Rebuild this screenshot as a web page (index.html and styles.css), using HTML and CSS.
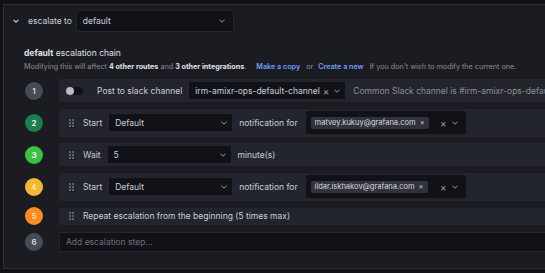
FILE: index.html
```html
<!DOCTYPE html>
<html lang="en">
<head>
    <meta charset="UTF-8">
    <meta name="viewport" content="width=device-width, initial-scale=1.0">
    <title>Escalation chain</title>
    <link rel="stylesheet" href="styles.css">
</head>
<body>

    <div class="panel">
        <!-- Маршрут -->
        <div class="route-row">
            <svg class="caret" width="6" height="4" viewBox="0 0 6 4"><polyline points="0.5,0.8 3,3.2 5.5,0.8" fill="none" stroke="#ccccdc" stroke-width="1.1"/></svg>
            <span>escalate to</span>
            <div class="select select-route">
                <span>default</span>
                <svg class="chev" width="6" height="4" viewBox="0 0 6 4"><polyline points="0.5,0.8 3,3.2 5.5,0.8" fill="none" stroke="#9fa0a8" stroke-width="1"/></svg>
            </div>
        </div>

        <div class="chain">
            <div class="chain-title"><b>default</b> escalation chain</div>
            <div class="chain-note">
                Modifying this will affect <b>4 other routes</b> and <b>3 other integrations</b>.<a href="#" class="link link-copy">Make a copy</a><span class="or">or</span><a href="#" class="link">Create a new</a><span class="tail">If you don't wish to modify the current one.</span>
            </div>

            <ol class="steps">
                <li class="step">
                    <span class="num num-grey">1</span>
                    <div class="step-body">
                        <span class="toggle"><span class="knob"></span></span>
                        <span class="label">Post to slack channel</span>
                        <div class="select select-slack">
                            <span>irm-amixr-ops-default-channel</span>
                            <span class="clear">×</span>
                            <svg class="chev" width="6" height="4" viewBox="0 0 6 4"><polyline points="0.5,0.8 3,3.2 5.5,0.8" fill="none" stroke="#9fa0a8" stroke-width="1"/></svg>
                        </div>
                        <span class="hint">Common Slack channel is #irm-amixr-ops-default-channel</span>
                    </div>
                </li>
                <li class="step">
                    <span class="num num-green">2</span>
                    <div class="step-body tall">
                        <svg class="handle" width="5" height="8" viewBox="0 0 5 8"><circle cx="1" cy="1" r="0.8"/><circle cx="4" cy="1" r="0.8"/><circle cx="1" cy="4" r="0.8"/><circle cx="4" cy="4" r="0.8"/><circle cx="1" cy="7" r="0.8"/><circle cx="4" cy="7" r="0.8"/></svg>
                        <span class="label">Start</span>
                        <div class="select select-step">
                            <span>Default</span>
                            <svg class="chev" width="6" height="4" viewBox="0 0 6 4"><polyline points="0.5,0.8 3,3.2 5.5,0.8" fill="none" stroke="#9fa0a8" stroke-width="1"/></svg>
                        </div>
                        <span class="label">notification for</span>
                        <div class="multi">
                            <span class="chip">matvey.kukuy@grafana.com <span class="chip-x">×</span></span>
                            <span class="clear">×</span>
                            <svg class="chev" width="6" height="4" viewBox="0 0 6 4"><polyline points="0.5,0.8 3,3.2 5.5,0.8" fill="none" stroke="#9fa0a8" stroke-width="1"/></svg>
                        </div>
                    </div>
                </li>
                <li class="step">
                    <span class="num num-lime">3</span>
                    <div class="step-body">
                        <svg class="handle" width="5" height="8" viewBox="0 0 5 8"><circle cx="1" cy="1" r="0.8"/><circle cx="4" cy="1" r="0.8"/><circle cx="1" cy="4" r="0.8"/><circle cx="4" cy="4" r="0.8"/><circle cx="1" cy="7" r="0.8"/><circle cx="4" cy="7" r="0.8"/></svg>
                        <span class="label">Wait</span>
                        <div class="select select-step">
                            <span>5</span>
                            <svg class="chev" width="6" height="4" viewBox="0 0 6 4"><polyline points="0.5,0.8 3,3.2 5.5,0.8" fill="none" stroke="#9fa0a8" stroke-width="1"/></svg>
                        </div>
                        <span class="label">minute(s)</span>
                    </div>
                </li>
                <li class="step">
                    <span class="num num-yellow">4</span>
                    <div class="step-body tall">
                        <svg class="handle" width="5" height="8" viewBox="0 0 5 8"><circle cx="1" cy="1" r="0.8"/><circle cx="4" cy="1" r="0.8"/><circle cx="1" cy="4" r="0.8"/><circle cx="4" cy="4" r="0.8"/><circle cx="1" cy="7" r="0.8"/><circle cx="4" cy="7" r="0.8"/></svg>
                        <span class="label">Start</span>
                        <div class="select select-step">
                            <span>Default</span>
                            <svg class="chev" width="6" height="4" viewBox="0 0 6 4"><polyline points="0.5,0.8 3,3.2 5.5,0.8" fill="none" stroke="#9fa0a8" stroke-width="1"/></svg>
                        </div>
                        <span class="label">notification for</span>
                        <div class="multi">
                            <span class="chip">ildar.iskhakov@grafana.com <span class="chip-x">×</span></span>
                            <span class="clear">×</span>
                            <svg class="chev" width="6" height="4" viewBox="0 0 6 4"><polyline points="0.5,0.8 3,3.2 5.5,0.8" fill="none" stroke="#9fa0a8" stroke-width="1"/></svg>
                        </div>
                    </div>
                </li>
                <li class="step">
                    <span class="num num-orange">5</span>
                    <div class="step-body short">
                        <svg class="handle" width="5" height="8" viewBox="0 0 5 8"><circle cx="1" cy="1" r="0.8"/><circle cx="4" cy="1" r="0.8"/><circle cx="1" cy="4" r="0.8"/><circle cx="4" cy="4" r="0.8"/><circle cx="1" cy="7" r="0.8"/><circle cx="4" cy="7" r="0.8"/></svg>
                        <span class="label">Repeat escalation from the beginning (5 times max)</span>
                    </div>
                </li>
                <li class="step">
                    <span class="num num-grey">6</span>
                    <input class="add-step" type="text" placeholder="Add escalation step...">
                </li>
            </ol>
        </div>
    </div>

</body>
</html>
```

FILE: styles.css
```css
/* Основные стили */
:root {
    --page-bg: #111217;
    --panel-bg: #1a1c21;
    --row-bg: #22252b;
    --input-bg: #111217;
    --border-color: #2c3036;
    --text-color: #ccccdc;
    --text-muted: #8e8e97;
    --link-color: #6e9fff;
}

body {
    margin: 0;
    padding: 4px 0 4px 3px;
    background-color: var(--page-bg);
    color: var(--text-color);
    font-family: Inter, "Open Sans", sans-serif;
    font-size: 8.5px;
    overflow: hidden;
}

.panel {
    width: 542px;
    height: 265px;
    box-sizing: border-box;
    background-color: var(--panel-bg);
    border: 1px solid var(--border-color);
    border-right: none;
    overflow: hidden;
}

/* Строка маршрута */
.route-row {
    display: flex;
    align-items: center;
    height: 22px;
    margin-top: 5px;
    padding-left: 9px;
}

.caret {
    margin-right: 9px;
}

.select {
    display: flex;
    align-items: center;
    box-sizing: border-box;
    height: 19px;
    padding: 0 5px 0 6px;
    background-color: var(--input-bg);
    border: 1px solid #23262c;
    border-radius: 2px;
    color: var(--text-color);
}

.select span:first-child {
    flex: 1;
    white-space: nowrap;
}

.select-route {
    width: 158px;
    height: 22px;
    margin-left: 4px;
    padding-right: 8px;
}

/* Цепочка эскалации */
.chain {
    padding-left: 20px;
}

.chain-title {
    margin-top: 16px;
    font-size: 8.5px;
    color: #e0e0ea;
}

.chain-title b {
    font-weight: 700;
}

.chain-note {
    margin-top: 4px;
    font-size: 7.2px;
    color: var(--text-muted);
    white-space: nowrap;
}

.chain-note b {
    color: #e0e0ea;
    font-weight: 700;
}

.link {
    color: var(--link-color);
    font-weight: 600;
    text-decoration: none;
}

.link-copy {
    margin-left: 10px;
}

.or {
    margin: 0 5px 0 6px;
}

.tail {
    margin-left: 6px;
}

/* Шаги */
.steps {
    list-style: none;
    margin: 8px 0 0;
    padding: 0;
    display: flex;
    flex-direction: column;
    gap: 6.5px;
}

.step {
    display: flex;
    align-items: center;
    gap: 16px;
}

.num {
    flex: none;
    width: 18px;
    height: 18px;
    margin-left: 1px;
    border-radius: 50%;
    display: flex;
    align-items: center;
    justify-content: center;
    font-size: 8px;
    font-weight: 600;
    color: #fff;
}

.num-grey { background-color: #464c54; color: #d8d9e0; }
.num-green { background-color: #1a7f4b; }
.num-lime { background-color: #37c33f; }
.num-yellow { background-color: #f5b836; color: #fde7b0; }
.num-orange { background-color: #ff8a1f; color: #ffe3c6; }

.step-body {
    flex: 1;
    display: flex;
    align-items: center;
    height: 23px;
    box-sizing: border-box;
    padding-left: 7px;
    background-color: var(--row-bg);
    white-space: nowrap;
    overflow: hidden;
}

.step-body.tall {
    height: 28px;
}

.step-body.short {
    height: 17px;
}

.handle {
    flex: none;
    fill: #b5b6c0;
    margin: 0 9px 0 3px;
}

.label {
    margin-right: 6px;
}

/* Переключатель */
.toggle {
    flex: none;
    position: relative;
    width: 17px;
    height: 8px;
    margin-right: 14px;
    border-radius: 8px;
    background-color: #111217;
}

.knob {
    position: absolute;
    left: 0;
    top: 0;
    width: 8px;
    height: 8px;
    border-radius: 50%;
    background-color: #b9bac2;
}

.select-slack {
    flex: none;
    width: 158px;
    margin-right: 7px;
}

.select-step {
    flex: none;
    width: 125px;
    height: 19px;
    margin-right: 6px;
}

.clear {
    color: #9fa0a8;
    font-size: 10px;
    margin-right: 5px;
}

.hint {
    color: var(--text-muted);
}

/* Мультиселект */
.multi {
    flex: none;
    display: flex;
    align-items: center;
    box-sizing: border-box;
    width: 160px;
    height: 23px;
    padding: 0 8px 0 5px;
    background-color: var(--input-bg);
    border-radius: 2px;
    margin-left: 2px;
}

.chip {
    flex: none;
    height: 12px;
    line-height: 12px;
    padding: 0 4px;
    margin-right: auto;
    background-color: #30333a;
    border-radius: 2px;
    font-size: 7.5px;
    color: #d8d9e0;
}

.chip-x {
    margin-left: 2px;
    color: #c0c1c9;
}

.add-step {
    flex: 1;
    height: 20px;
    box-sizing: border-box;
    padding: 0 6px;
    background-color: var(--input-bg);
    border: 1px solid #24272d;
    border-right: none;
    color: var(--text-color);
    font-family: inherit;
    font-size: 8.5px;
}

.add-step::placeholder {
    color: #6d6f78;
}
```
